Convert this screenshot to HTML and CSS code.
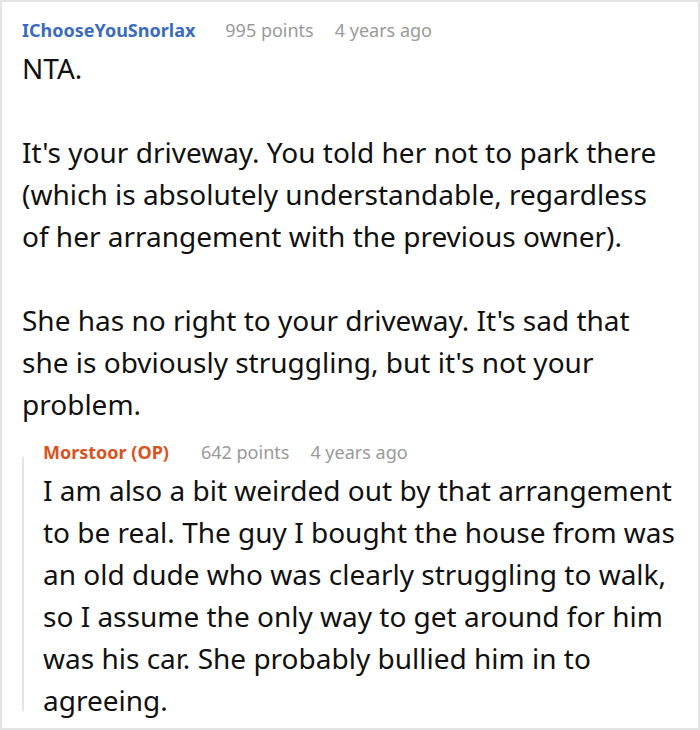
FILE: index.html
```html
<!DOCTYPE html>
<html>
<head>
<meta charset="utf-8">
<link rel="stylesheet" href="styles.css">
</head>
<body>
<div class="frame">
  <div class="comment">
    <div class="meta">
      <span class="user">IChooseYouSnorlax</span>
      <span class="info">995 points</span>
      <span class="info">4 years ago</span>
    </div>
    <div class="body">
      <p>NTA.</p>
      <p>It's your driveway. You told her not to park there (which is absolutely understandable, regardless of her arrangement with the previous owner).</p>
      <p>She has no right to your driveway. It's sad that she is obviously struggling, but it's not your problem.</p>
    </div>
    <div class="reply">
      <div class="meta">
        <span class="user op">Morstoor (OP)</span>
        <span class="info">642 points</span>
        <span class="info">4 years ago</span>
      </div>
      <div class="body">
        <p>I am also a bit weirded out by that arrangement to be real. The guy I bought the house from was an old dude who was clearly struggling to walk, so I assume the only way to get around for him was his car. She probably bullied him in to agreeing.</p>
      </div>
    </div>
  </div>
</div>
</body>
</html>
```

FILE: styles.css
```css
html, body {
  margin: 0;
  padding: 0;
  background: #fff;
}
.frame {
  width: 700px;
  height: 730px;
  box-sizing: border-box;
  border: 2px solid #e4e4e4;
  overflow: hidden;
  font-family: "Noto Sans", sans-serif;
  color: #111;
}
.comment {
  padding: 14px 22px 0 20px;
}
.meta {
  display: flex;
  gap: 21px;
  font-size: 18px;
  line-height: 28px;
  margin-bottom: 3px;
}
.user {
  font-weight: 700;
  color: #3a6bbf;
  margin-right: 9px;
}
.user.op {
  color: #d9531f;
  margin-right: 11px;
}
.info {
  color: #999;
}
.body {
  font-size: 28px;
  line-height: 42px;
}
.body p {
  margin: 0 0 42px 0;
}
.body p:last-child {
  margin-bottom: 0;
}
.reply {
  position: relative;
  margin-top: 13px;
  padding-left: 21px;
}
.reply::before {
  content: "";
  position: absolute;
  left: 0;
  top: 19px;
  bottom: 10px;
  width: 2px;
  background: #e4e4e4;
}
```
